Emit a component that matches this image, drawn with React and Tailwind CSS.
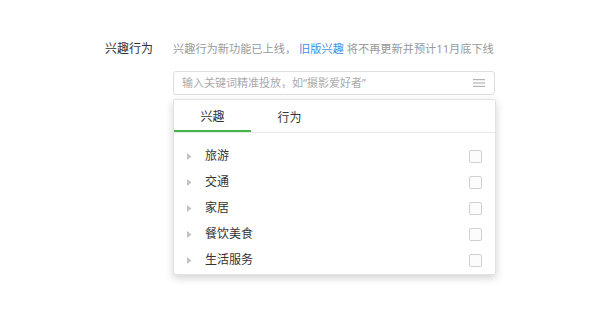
export default function App() {
  const items = ["旅游", "交通", "家居", "餐饮美食", "生活服务"];
  const Comma = () => <span className="inline-block w-[1em] text-left">，</span>;
  return (
    <div
      className="w-[600px] h-[315px] bg-white overflow-hidden"
      style={{ fontFamily: '"Noto Sans", "Noto Sans CJK SC", sans-serif' }}
    >
      <div className="flex pt-[39px] pl-[105px]">
        <div className="w-[68px] shrink-0 text-[12px] leading-[20px] text-[#333]">兴趣行为</div>
        <div className="w-[322px] shrink-0">
          <div className="text-[11.2px] leading-[20px] text-[#9a9a9a] whitespace-nowrap">
            兴趣行为新功能已上线<Comma />
            <span className="ml-[3px] text-[#3b8fe3]">旧版兴趣</span> 将不再更新并预计11月底下线
          </div>
          <div className="mt-[12px] h-[24px] border border-[#dedede] rounded-[3px] flex items-center pl-[8px] pr-[9px]">
            <span className="flex-1 text-[11px] text-[#aaa] whitespace-nowrap">
              输入关键词精准投放<Comma />如“摄影爱好者”
            </span>
            <svg width="12" height="9" viewBox="0 0 12 9" className="shrink-0">
              <rect x="0" y="0" width="12" height="1.2" fill="#b5b5b5" />
              <rect x="0" y="3.4" width="12" height="1.2" fill="#b5b5b5" />
              <rect x="0" y="6.8" width="12" height="1.2" fill="#b5b5b5" />
            </svg>
          </div>
          <div className="mt-[4px] w-[323px] border border-[#e3e3e3] rounded-[2px] bg-white shadow-[0_3px_8px_rgba(0,0,0,0.18)] pb-[1px]">
            <div className="flex border-b border-[#e8e8e8]">
              <div className="w-[77px] h-[32px] -mb-px border-b-2 border-[#44b549] flex items-center justify-center pt-[3px] text-[12px] text-[#333]">
                兴趣
              </div>
              <div className="w-[77px] h-[32px] flex items-center justify-center pt-[3px] text-[12px] text-[#333]">
                行为
              </div>
            </div>
            <div className="pt-[10px]">
              {items.map((t) => (
                <div key={t} className="h-[26px] flex items-center pl-[13px] pr-[13px]">
                  <svg width="5" height="7" viewBox="0 0 5 7" className="shrink-0">
                    <path d="M0 0 L4.5 3.5 L0 7 Z" fill="#c2c2c2" />
                  </svg>
                  <span className="ml-[13px] flex-1 text-[12px] text-[#333]">{t}</span>
                  <div className="w-[13px] h-[13px] border border-[#d0d0d0] rounded-[2px] bg-[#fcfcfc]" />
                </div>
              ))}
            </div>
          </div>
        </div>
      </div>
    </div>
  );
}
